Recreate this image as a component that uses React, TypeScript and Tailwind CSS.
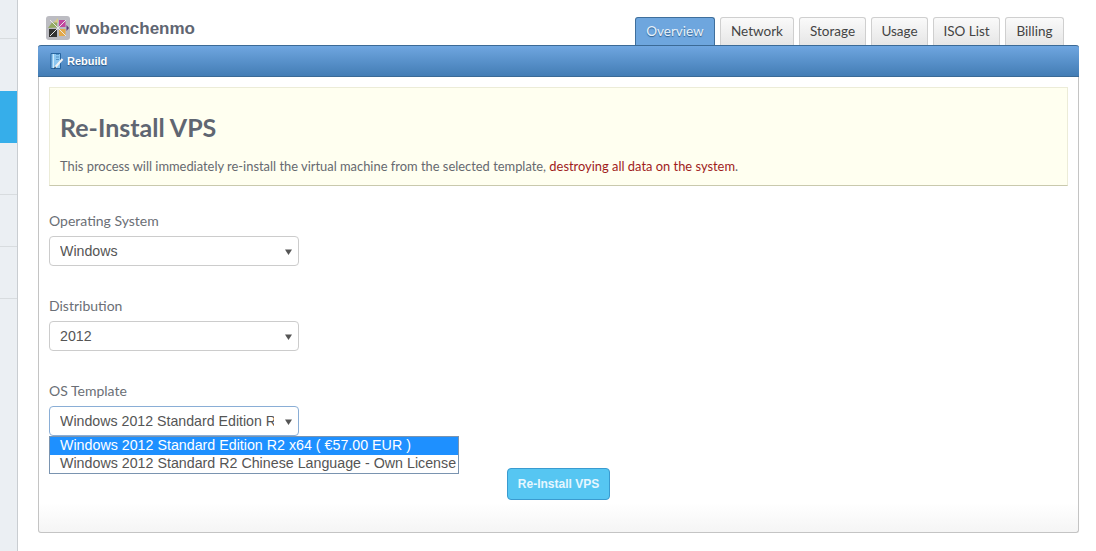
import React from "react";

const tabs = [
  { name: "Network", w: "w-[74px]" },
  { name: "Storage", w: "w-[67px]" },
  { name: "Usage", w: "w-[57px]" },
  { name: "ISO List", w: "w-[67px]" },
  { name: "Billing", w: "w-[59px]" },
];

function Caret() {
  return (
    <svg width="7" height="6" viewBox="0 0 7 6" className="shrink-0">
      <path d="M0 0.5H7L3.5 6Z" fill="#555" />
    </svg>
  );
}

function Logo() {
  return (
    <svg width="24" height="24" viewBox="0 0 24 24" className="shrink-0">
      <rect width="24" height="24" rx="3" fill="#bcbcc2" />
      <path d="M12 2L7 7H12Z" fill="#d8cc8c" />
      <path d="M2 12L6 6.5H11V11.5Z" fill="#93aa62" />
      <path d="M13 4H19.5V11H13Z" fill="#c2459f" />
      <path d="M13 13H19.5V20H13Z" fill="#e3a94a" />
      <path d="M3 13H11V21H3Z" fill="#333333" />
      <path d="M20.5 9L23 12L20.5 15Z" fill="#5c3a78" />
      <path d="M4 20L20 4M4 4L20 20" stroke="#e8e8e8" strokeWidth="1" fill="none" />
    </svg>
  );
}

function RebuildIcon() {
  return (
    <svg width="14" height="18" viewBox="0 0 14 18" className="shrink-0">
      <path d="M1 1.5H10.5V16.5H1Z" fill="#8cc6f0" stroke="#1f5c99" strokeWidth="0.9" />
      <path d="M3.5 2V16" stroke="#d5ecfb" strokeWidth="0.9" />
      <path d="M6 2.5H9M6 5H9M6 7.5H9" stroke="#2f6ea8" strokeWidth="0.6" />
      <path d="M5.5 15L12.5 7" stroke="#f2f2f2" strokeWidth="2" />
      <path d="M4.5 16.5L5.5 14.8" stroke="#333" strokeWidth="1" />
    </svg>
  );
}

function Field({ label, value, focused }: { label: string; value: string; focused?: boolean }) {
  return (
    <div>
      <div className="text-[14px] leading-[20px] text-[#6b6f76] font-['Lato',sans-serif]">{label}</div>
      <div
        className={`mt-[5px] w-[250px] h-[30px] bg-white rounded-[4px] border flex items-center pl-[10px] pr-[6px] pt-[1px] text-[14.2px] text-[#555] font-['Liberation_Sans',sans-serif] ${
          focused ? "border-[#8aaed6]" : "border-[#cccccc]"
        }`}
      >
        <span className="w-[214px] overflow-hidden whitespace-nowrap">{value}</span>
        <span className="flex-1" />
        <Caret />
      </div>
    </div>
  );
}

export default function App() {
  return (
    <div className="w-[1096px] h-[551px] overflow-hidden bg-white flex font-['Lato',sans-serif]">
      {/* Sidebar */}
      <div className="w-[18px] h-full shrink-0 bg-[#ebeff3] border-r border-[#c9cdd1] flex flex-col">
        <div className="h-[39px] border-b border-[#d8dcdf]" />
        <div className="h-[52px]" />
        <div className="h-[52px] w-[17px] bg-[#36aeea]" />
        <div className="h-[52px] border-b border-[#d8dcdf]" />
        <div className="h-[52px] border-b border-[#d8dcdf]" />
        <div className="h-[52px] border-b border-[#d8dcdf]" />
      </div>

      {/* Main */}
      <div className="w-[1041px] ml-[20px] flex flex-col">
        <div className="h-[45px] flex items-end justify-between">
          <div className="flex items-center gap-[6px] pl-[8px] pb-[4px]">
            <Logo />
            <span className="text-[17px] font-bold text-[#5f6672] font-['Liberation_Sans',sans-serif]">wobenchenmo</span>
          </div>
          <div className="flex gap-[5px] mr-[15px] text-[13.5px]">
            <div className="w-[80px] h-[28px] rounded-t-[3px] border border-b-0 border-[#3f6f9c] bg-[#6ea6de] text-[#e8f2fb] flex items-center justify-center [text-shadow:0_1px_1px_#33618f]">
              Overview
            </div>
            {tabs.map((t) => (
              <div
                key={t.name}
                className={`${t.w} h-[28px] rounded-t-[3px] border border-b-0 border-[#cfcfcf] bg-gradient-to-b from-[#fafafa] to-[#e6e6e6] text-[#444] flex items-center justify-center`}
              >
                {t.name}
              </div>
            ))}
          </div>
        </div>

        {/* Panel */}
        <div className="relative h-[488px] rounded-[3px] border border-t-0 border-[#c4c4c4] bg-gradient-to-b from-white from-[94%] to-[#f5f5f5]">
          <div className="-mx-px h-[32px] rounded-t-[3px] border-t border-b border-[#3b6a96] bg-gradient-to-b from-[#6fa6e0] to-[#437db5] flex items-center gap-[3px] pl-[12px]">
            <RebuildIcon />
            <span className="text-[11px] font-bold text-white font-['Liberation_Sans',sans-serif] [text-shadow:0_1px_1px_#2a5580]">Rebuild</span>
          </div>

          <div className="px-[10px] pt-[10px]">
            <div className="h-[99px] bg-[#fffff0] border border-[#ececd8] border-b-[#c9c9ad] pl-[10px] pt-[23px]">
              <h1 className="text-[25px] leading-[32px] font-bold text-[#5f6672]">Re-Install VPS</h1>
              <p className="mt-[14px] text-[12.9px] leading-[18px] text-[#66696f]">
                This process will immediately re-install the virtual machine from the selected template,{" "}
                <span className="text-[#a01c1c]">destroying all data on the system</span>.
              </p>
            </div>

            <div className="mt-[25px] flex flex-col gap-[30px]">
              <Field label="Operating System" value="Windows" />
              <Field label="Distribution" value="2012" />
              <div className="relative">
                <Field label="OS Template" value="Windows 2012 Standard Edition R2 x64 ( €57.00 EUR )" focused />
                <div className="absolute left-0 top-[55px] w-[410px] border border-[#7a94b0] bg-white text-[14.25px] leading-[17px] text-[#555] font-['Liberation_Sans',sans-serif] whitespace-nowrap">
                  <div className="h-[18px] bg-[#1e90ff] text-white pl-[10px]">Windows 2012 Standard Edition R2 x64 ( €57.00 EUR )</div>
                  <div className="h-[18px] pl-[10px]">Windows 2012 Standard R2 Chinese Language - Own License</div>
                </div>
              </div>
            </div>

            <div className="mt-[32px] flex justify-center">
              <div className="w-[103px] h-[32px] rounded-[4px] border border-[#3a9bd0] bg-[#56c6f2] text-[#e6f7ff] text-[12px] font-bold flex items-center justify-center font-['Liberation_Sans',sans-serif]">
                Re-Install VPS
              </div>
            </div>
          </div>
        </div>
      </div>
    </div>
  );
}
